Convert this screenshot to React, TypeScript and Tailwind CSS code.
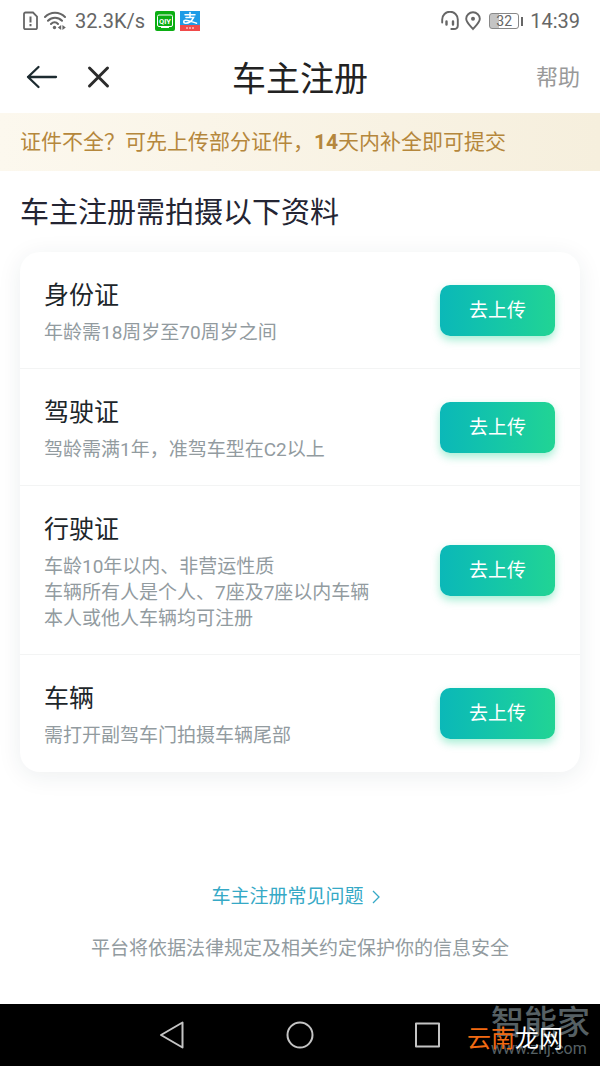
import React from 'react';

interface DocumentItem {
  title: string;
  lines: string[];
}

const documents: DocumentItem[] = [
  { title: '身份证', lines: ['年龄需18周岁至70周岁之间'] },
  { title: '驾驶证', lines: ['驾龄需满1年，准驾车型在C2以上'] },
  {
    title: '行驶证',
    lines: ['车龄10年以内、非营运性质', '车辆所有人是个人、7座及7座以内车辆', '本人或他人车辆均可注册'],
  },
  { title: '车辆', lines: ['需打开副驾车门拍摄车辆尾部'] },
];

const StatusBar: React.FC = () => {
  return (
    <div className="flex h-10 items-center justify-between pl-[23px] pr-5 pt-[2px] text-[#666]">
      <div className="flex items-center">
        <svg className="h-5 w-[15px]" viewBox="0 0 15 20" fill="none" stroke="currentColor" strokeWidth="1.8">
          <path d="M2.500 1.500h7.500l4 4v11.200a1.500 1.500 0 0 1-1.500 1.500h-10a1.500 1.500 0 0 1-1.500-1.500v-13.700a1.500 1.500 0 0 1 1.500-1.500z" />
          <path d="M7.500 5.500v6M7.500 13v2.200" strokeWidth="2" />
        </svg>
        <svg className="ml-[6px] h-5 w-[22px]" viewBox="0 0 22 20" fill="none" stroke="currentColor" strokeWidth="2" strokeLinecap="round">
          <path d="M1 6c5.500-5.700 14.500-5.700 20 0M4 9.700c4-4 10-4 14 0M7 13c2.300-2.300 5-2.300 7 0" />
          <circle cx="10.500" cy="16.500" r="1.700" fill="currentColor" stroke="none" />
          <path d="M17.200 14v5l-3.400-2.500zM18.400 14v5l3.400-2.500z" fill="currentColor" stroke="none" />
        </svg>
        <span className="ml-[9px] text-[20px] leading-6">32.3K/s</span>
        <svg className="ml-[10px] size-5" viewBox="0 0 20 20">
          <rect width="20" height="20" rx="2" fill="#0bae13" />
          <rect x="2.500" y="4" width="15" height="11.500" rx="1.500" fill="none" stroke="#fff" />
          <path d="M6 16.500h8" stroke="#fff" strokeWidth="1" />
          <text x="10" y="12.600" textAnchor="middle" fontSize="7.500" fontWeight="700" fill="#fff">QIY</text>
        </svg>
        <svg className="ml-[5px] size-5" viewBox="0 0 20 20">
          <rect width="20" height="20" fill="#1e9be6" />
          <g fill="none" stroke="#fff" strokeWidth="1.500" strokeLinecap="round">
            <path d="M5 3.800h10M10 1.500v4.700M6 6.600h7.500c-1.500 3-4.500 5.600-7.800 5.600c-2.600 0-2.600-3 0-3c3.300 0 7 2 10.800 3" />
          </g>
          <rect y="14" width="20" height="6" fill="#f04a4a" />
          <path d="M6 17h8" stroke="#fbb" strokeWidth="1.500" strokeDasharray="2 1" />
        </svg>
      </div>
      <div className="flex items-center">
        <svg className="h-5 w-[18px]" viewBox="0 0 18 20" fill="none" stroke="currentColor" strokeWidth="1.900" strokeLinecap="round">
          <path d="M1.200 11.500v-3a7.500 7.500 0 0 1 15.600 0v6c0 2.500-1.500 3.500-4 3.500h-2.500" />
          <path d="M5.500 10.500v3M12 10.500v3" strokeWidth="2.400" />
        </svg>
        <svg className="ml-[6px] h-5 w-4" viewBox="0 0 16 20" fill="none" stroke="currentColor" strokeWidth="1.900">
          <path d="M8 18c-2.500-3-6.800-6.500-6.800-10.200a6.800 6.500 0 0 1 13.600 0c0 3.700-4.300 7.200-6.800 10.200z" />
          <circle cx="8" cy="7.800" r="2" fill="currentColor" stroke="none" />
        </svg>
        <div className="ml-2 flex items-center gap-[2px]">
          <div className="h-4 w-[30px] rounded-[3px] border border-[#888] bg-linear-to-r from-[#c4c4c4] from-32% to-white to-32% text-center text-[14px] leading-[14px]">
            32
          </div>
          <div className="h-[9px] w-[2px] bg-[#666]" />
        </div>
        <span className="ml-[7px] text-[20px] leading-6">14:39</span>
      </div>
    </div>
  );
};

const Header: React.FC = () => {
  return (
    <header className="grid h-[73px] grid-cols-[1fr_auto_1fr] items-center px-5">
      <div className="flex items-center gap-[29px] pl-[6px] text-[#1d2b30]">
        <button type="button" aria-label="返回">
          <svg className="h-6 w-8" viewBox="0 0 32 24" fill="none" stroke="currentColor" strokeWidth="2.300" strokeLinecap="round" strokeLinejoin="round">
            <path d="M30 12h-28M12.500 2l-10.500 10l10.500 10" />
          </svg>
        </button>
        <button type="button" aria-label="关闭">
          <svg className="size-6" viewBox="0 0 24 24" fill="none" stroke="#2b2b2b" strokeWidth="3" strokeLinecap="round">
            <path d="M2.500 3l18 18M20.500 3l-18 18" />
          </svg>
        </button>
      </div>
      <h1 className="pt-1 text-[34px] leading-10 text-[#222]">车主注册</h1>
      <button type="button" className="justify-self-end pt-[2px] text-[22px] leading-8 text-[#999]">
        帮助
      </button>
    </header>
  );
};

const DocumentRow: React.FC<DocumentItem> = ({ title, lines }) => {
  return (
    <li className="flex items-center justify-between border-b border-[#f3f4f4] pl-6 pr-[25px] last:border-transparent">
      <div className="pb-[22px] pt-[26px]">
        <h3 className="mb-[6px] text-[25px] leading-9 text-[#1d262a]">{title}</h3>
        {lines.map((line) => (
          <p key={line} className="text-[19px] leading-[26px] text-[#929b9f]">
            {line}
          </p>
        ))}
      </div>
      <button
        type="button"
        className="h-[51px] w-[115px] shrink-0 rounded-[10px] bg-linear-to-r from-[#0bb8b8] to-[#21d494] pt-[2px] text-[19px] text-white shadow-[0_4px_8px_rgba(33,212,148,0.4)]"
      >
        去上传
      </button>
    </li>
  );
};

const NavigationBar: React.FC = () => {
  return (
    <nav className="relative flex h-[62px] items-center justify-center gap-[100px] bg-black text-[#c4c4c4]">
      <button type="button" aria-label="后退">
        <svg className="size-7" viewBox="0 0 28 28" fill="none" stroke="currentColor" strokeWidth="2" strokeLinejoin="round">
          <path d="M24.500 1.500v25l-21.500-12.500z" />
        </svg>
      </button>
      <button type="button" aria-label="主屏幕">
        <svg className="size-7" viewBox="0 0 28 28" fill="none" stroke="currentColor" strokeWidth="2">
          <circle cx="14" cy="14" r="12.500" />
        </svg>
      </button>
      <button type="button" aria-label="最近任务">
        <svg className="size-7" viewBox="0 0 28 28" fill="none" stroke="currentColor" strokeWidth="2" strokeLinejoin="round">
          <rect x="2" y="2.500" width="23" height="23" />
        </svg>
      </button>
      <div className="absolute right-[10px] top-0 text-[#566064]">
        <div className="text-[33px] font-medium leading-[38px]">智能家</div>
        <div className="text-[16px] leading-[14px]">www.znj.com</div>
      </div>
      <div className="absolute right-[37px] top-[17px] text-[24px] leading-9 text-white">
        <span className="text-[#f26a12]">云南</span>龙网
      </div>
    </nav>
  );
};

export default function App() {
  return (
    <div className="flex min-h-screen flex-col bg-white font-[Roboto,'Noto_Sans_CJK_SC',sans-serif]">
      <StatusBar />
      <Header />
      <p className="bg-linear-to-r from-[#fcf8ee] to-[#f6efdd] px-5 py-[14px] text-[21px] leading-[30px] text-[#b5873c]">
        证件不全？可先上传部分证件，<b>14</b>天内补全即可提交
      </p>
      <main className="flex grow flex-col px-5">
        <h2 className="mt-[22px] text-[29px] leading-10 text-[#242533]">车主注册需拍摄以下资料</h2>
        <ul className="mt-[19px] rounded-[20px] shadow-[0_4px_24px_rgba(30,50,60,0.08)]">
          {documents.map((item) => (
            <DocumentRow key={item.title} {...item} />
          ))}
        </ul>
        <footer className="mt-auto flex flex-col items-center pb-[41px] text-[19px] leading-7">
          <a href="#faq" className="flex items-center gap-[7px] pr-2 text-[#36a9c6]">
            车主注册常见问题
            <svg className="h-4 w-[10px]" viewBox="0 0 10 16" fill="none" stroke="currentColor" strokeWidth="1.300">
              <path d="M2 2l6 6l-6 6" />
            </svg>
          </a>
          <p className="mt-6 text-[#929b9f]">平台将依据法律规定及相关约定保护你的信息安全</p>
        </footer>
      </main>
      <NavigationBar />
    </div>
  );
}
